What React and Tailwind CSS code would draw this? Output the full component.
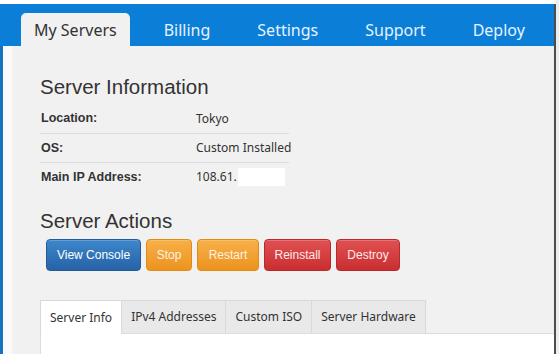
import React from "react";

const NAV = ["Billing", "Settings", "Support", "Deploy"];

const INFO = [
  { label: "Location:", value: "Tokyo" },
  { label: "OS:", value: "Custom Installed" },
  { label: "Main IP Address:", value: "108.61.", masked: true },
];

const ACTIONS = [
  { text: "View Console", w: "w-[95px]", color: "bg-gradient-to-b from-[#3d87cc] to-[#2762a6] border-[#255a99] text-white" },
  { text: "Stop", w: "w-[46px]", color: "bg-gradient-to-b from-[#f7b047] to-[#ec931d] border-[#e18b15] text-[#fdf3e3]" },
  { text: "Restart", w: "w-[62px]", color: "bg-gradient-to-b from-[#f7b047] to-[#ec931d] border-[#e18b15] text-[#fdf3e3]" },
  { text: "Reinstall", w: "w-[67px]", color: "bg-gradient-to-b from-[#e05052] to-[#c92d30] border-[#b8292b] text-[#fdeaea]" },
  { text: "Destroy", w: "w-[64px]", color: "bg-gradient-to-b from-[#e05052] to-[#c92d30] border-[#b8292b] text-[#fdeaea]" },
];

const TABS = ["Server Info", "IPv4 Addresses", "Custom ISO", "Server Hardware"];

export default function App() {
  return (
    <div className="w-[559px] h-[354px] bg-white flex overflow-hidden">
      <div className="w-[554px] flex flex-col pt-[4px]">
        {/* TOP NAV */}
        <div className="h-[42px] bg-[#0b7fd7] flex items-end pl-[21px] gap-[21px] font-['Noto_Sans',sans-serif] text-[16px]">
          <div className="h-[33px] px-[13px] flex items-center bg-[#f1f1f1] rounded-t-[5px] text-[#333]">
            My Servers
          </div>
          {NAV.map((n) => (
            <div key={n} className="h-[33px] px-[13px] flex items-center text-[#e6f3ff]">
              {n}
            </div>
          ))}
        </div>

        <div className="flex flex-1">
          <div className="w-[3px] bg-[#1573c4]" />
          <div className="w-[9px] bg-[#fafafa]" />
          <div className="flex-1 bg-[#f1f1f1] pl-[28px] pt-[29px] flex flex-col">
            {/* SERVER INFO */}
            <h2 className="font-['Liberation_Sans',sans-serif] text-[20.5px] leading-[24px] text-[#333]">
              Server Information
            </h2>
            <div className="w-[249px] mt-[5px]">
              {INFO.map((r, i) => (
                <div
                  key={r.label}
                  className={`h-[29px] flex items-center whitespace-nowrap ${i > 0 ? "border-t border-[#dcdcdc]" : ""}`}
                >
                  <div className="w-[156px] shrink-0 pl-[1px] font-['Liberation_Sans',sans-serif] font-bold text-[12.5px] text-[#333]">
                    {r.label}
                  </div>
                  <div className="flex items-center font-['Noto_Sans',sans-serif] text-[12px] text-[#333]">
                    {r.value}
                    {r.masked && <span className="inline-block w-[47px] h-[18px] bg-white ml-[1px]" />}
                  </div>
                </div>
              ))}
            </div>

            {/* ACTIONS */}
            <h2 className="mt-[18px] font-['Liberation_Sans',sans-serif] text-[20.5px] leading-[24px] text-[#333]">
              Server Actions
            </h2>
            <div className="flex gap-[5px] ml-[6px] mt-[6px]">
              {ACTIONS.map((a) => (
                <div
                  key={a.text}
                  className={`${a.w} h-[32px] flex items-center justify-center rounded-[4px] border font-['Liberation_Sans',sans-serif] text-[12px] shadow-[inset_0_1px_0_rgba(255,255,255,0.2)] ${a.color}`}
                >
                  {a.text}
                </div>
              ))}
            </div>

            {/* TABS */}
            <div className="mt-[29px] flex border-b border-[#dcdcdc] h-[34px] font-['Noto_Sans',sans-serif] text-[12px] text-[#333]">
              {TABS.map((t, i) => (
                <div
                  key={t}
                  className={`px-[9px] flex items-center border-t border-r border-[#d9d9d9] ${
                    i === 0 ? "bg-white border-l -mb-px" : "bg-[#e9e9e9]"
                  }`}
                >
                  {t}
                </div>
              ))}
            </div>
            <div className="flex-1 bg-white border-l border-[#dcdcdc]" />
          </div>
        </div>
      </div>
      <div className="w-[2px] mt-[4px] bg-[#4d4d4d]" />
      <div className="flex-1 bg-[#ededed]" />
    </div>
  );
}
